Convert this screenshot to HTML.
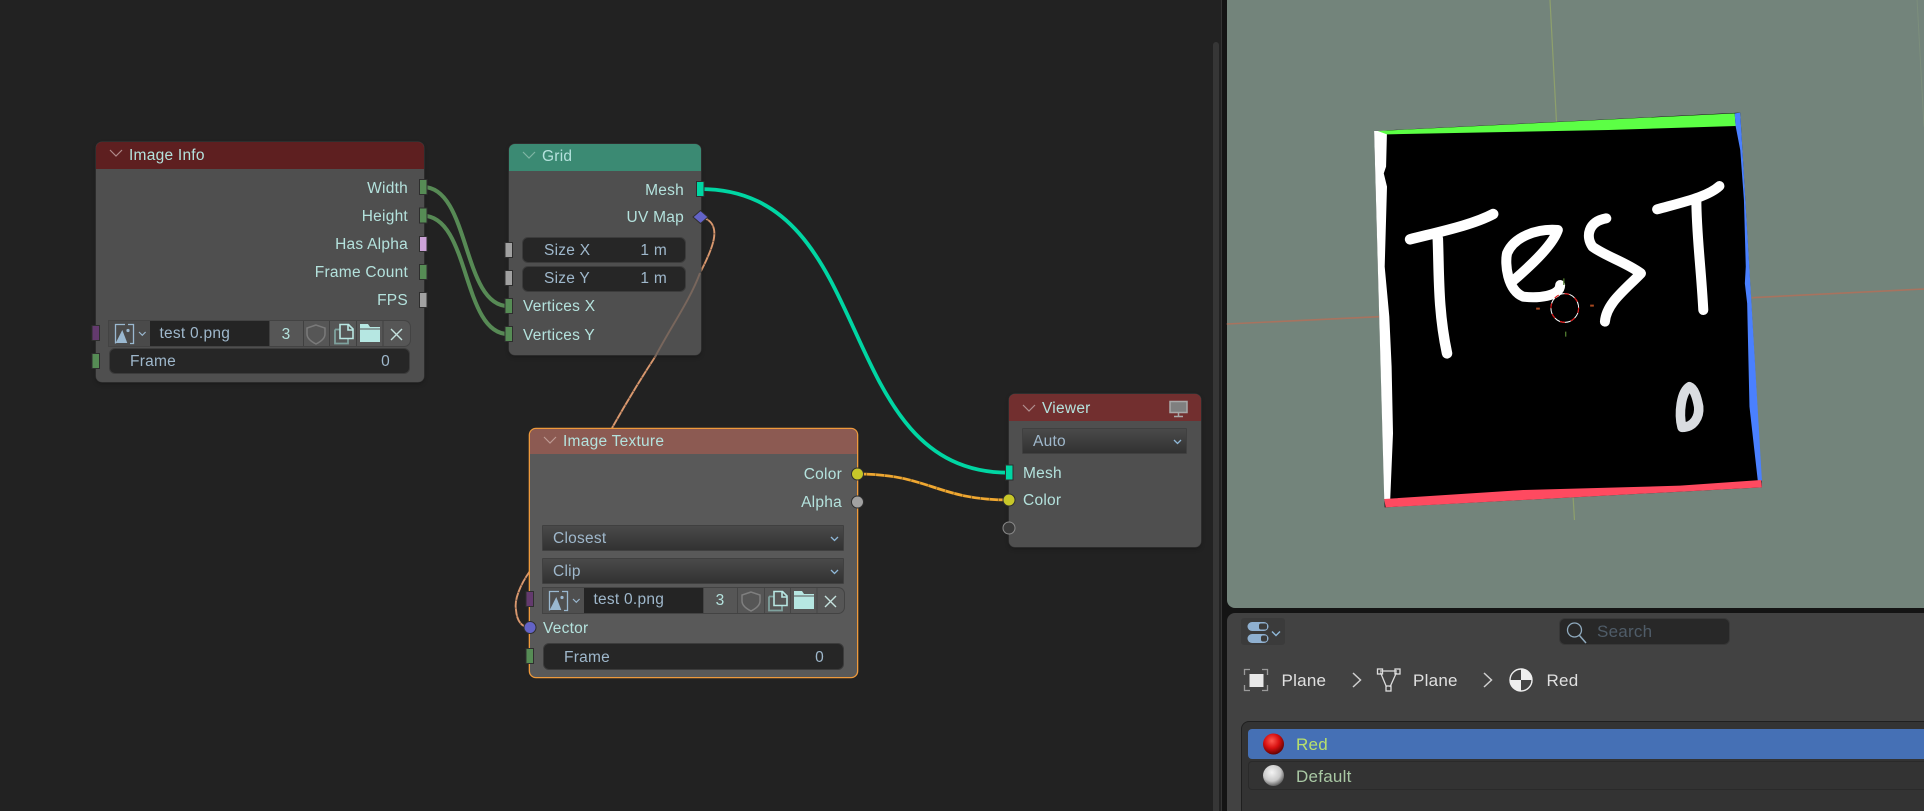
<!DOCTYPE html>
<html><head><meta charset="utf-8"><style>
html,body{margin:0;padding:0;background:#222}
#p{position:relative;width:1924px;height:811px;overflow:hidden;background:#222;font-family:"Liberation Sans",sans-serif;font-size:15.5px;letter-spacing:.25px}
#p div{position:absolute;box-sizing:border-box}
svg{position:absolute;left:0;top:0;overflow:visible}
.node{background:#4f4f4f;border-radius:6px;box-shadow:0 0 0 .5px #3a3a3a,0 2px 5px rgba(0,0,0,.25)}
.hd{left:0;top:0;right:0;border-radius:6px 6px 0 0}
.t{height:20px;line-height:20px;white-space:nowrap;color:#b4e2dd;margin-top:1.400px}
.r{text-align:right}
.f{background:#262626;border:1px solid #3c3c3c;border-radius:6px}
.dd{background:linear-gradient(#4a4a4a,#323232);border:1px solid #404040;border-radius:1px}
.b{color:#9fb8cc}
.l{font-size:17px}
.row{width:301px;height:25px;border-radius:0 6px 6px 0;background:#565656;box-shadow:0 0 0 1px #434343}
</style></head><body><div id="p">

<!-- scrollbar and split -->
<div style="left:1213px;top:42px;width:6px;height:769px;background:#363636;border-radius:3px 3px 0 0"></div>
<div style="left:1221px;top:0;width:1px;height:811px;background:#343434"></div>
<div style="left:1222px;top:0;width:702px;height:811px;background:#141414"></div>

<!-- links behind nodes -->
<svg width="1924" height="811" fill="none">
<path d="M423 187C470 187 462 306 508 306M423 215.7C470 215.7 462 334 508 334" stroke="#578a55" stroke-width="4"/>
<path d="M700 189C880 189 830 472.7 1009 472.7" stroke="#00d6a3" stroke-width="3.8"/>
<path d="M857 474C930 474 936 500 1009 500" stroke="#efa731" stroke-width="2.800"/>
<path d="M857 474C930 474 936 500 1009 500" stroke="#7a5a20" stroke-width="2.800" stroke-dasharray="1 8" opacity=".7"/>
<path d="M700 217C712 219 718 228 712 246C708 258 704 265 700 273C690 300 672 325 655 357C640 380 625 405 612 428" stroke="#d9986e" stroke-width="1.900"/>
<path d="M530 571C520 585 514 600 516 610C517 622 522 627 530 628" stroke="#d9986e" stroke-width="1.900"/>
<path d="M700 217C712 219 718 228 712 246C708 258 704 265 700 273M655 357C640 380 625 405 612 428M530 571C520 585 514 600 516 610C517 622 522 627 530 628" stroke="#6d5040" stroke-width="1.900" stroke-dasharray="1 7" opacity=".7"/>
</svg>

<!-- Image Info -->
<div class="node" style="left:96px;top:141.500px;width:327.500px;height:240.500px">
 <div class="hd" style="height:27px;background:#5e1f20"></div>
</div>
<svg width="1924" height="811" fill="none"><path d="M110 150l6 6 6-6" stroke="#b08a8a" stroke-width="1.2"/></svg>
<div class="t" style="left:129px;top:145px">Image Info</div>
<div class="t r" style="right:1516px;top:178px">Width</div>
<div class="t r" style="right:1516px;top:206px">Height</div>
<div class="t r" style="right:1516px;top:234px">Has Alpha</div>
<div class="t r" style="right:1516px;top:262px">Frame Count</div>
<div class="t r" style="right:1516px;top:290px">FPS</div>

<div class="row" style="left:108.500px;top:321px">
 <div style="left:0;top:0;width:41px;height:25px;background:#4a4a4a"></div>
 <div style="left:41px;top:0;width:119px;height:25px;background:#242424"></div>
 <div class="t b" style="left:51px;top:1.500px">test 0.png</div>
 <div class="t" style="left:160px;width:35px;top:2.500px;text-align:center">3</div>
 <svg width="301" height="25" fill="none">
  <path d="M160.500 0V25M194.500 0V25M220.500 0V25M247.500 0V25M274 0V25" stroke="#404040"/>
  <path d="M16 3.500H6.500V22.500M19 3.500H24.500V22.500H21" stroke="#9ab8d0" stroke-width="1.300"/>
  <path d="M6.700 22L13.300 9 18.300 22Z" fill="#9ab8d0"/><circle cx="19" cy="9.500" r="1.600" fill="#9ab8d0"/>
  <path d="M30 11l3.300 3.300 3.300-3.300" stroke="#9ab8d0" stroke-width="1.200"/>
  <path d="M207 4L198 7V13C198 18 203 21 207 23C211 21 216 18 216 13V7Z" stroke="#7a7a7a" stroke-width="1.500"/>
  <path d="M226 8.500H231M226 8.500V22.500H239V18" stroke="#7fa29e" stroke-width="1.800"/>
  <path d="M231 3.500H239.500L244 8V17.500H231ZM239 4V9H244" stroke="#b8e6e2" stroke-width="1.600"/>
  <path d="M251 3H259L261 6H271V21H251Z" fill="#b6e7e2"/><path d="M251 8H271" stroke="#565656"/>
  <path d="M282 8L293 19M293 8L282 19" stroke="#c5e2de" stroke-width="1.400"/>
 </svg>
</div>
<div class="f" style="left:108.500px;top:348px;width:301px;height:26px"></div>
<div class="t b" style="left:130px;top:351px">Frame</div>
<div class="t b r" style="right:1534px;top:351px">0</div>

<!-- Grid -->
<div class="node" style="left:509px;top:143.500px;width:191.500px;height:211.500px">
 <div class="hd" style="height:27px;background:#3b8a73"></div>
</div>
<svg width="1924" height="811" fill="none">
<path d="M523 152l6 6 6-6" stroke="#7fb5a4" stroke-width="1.200"/>
<path d="M700 273C690 300 672 325 655 357" stroke="#78665c" stroke-width="1.900"/>
</svg>
<div class="t" style="left:542px;top:146px">Grid</div>
<div class="t r" style="right:1240px;top:179.500px">Mesh</div>
<div class="t r" style="right:1240px;top:207px">UV Map</div>
<div class="f" style="left:522px;top:237px;width:164px;height:26px"></div>
<div class="f" style="left:522px;top:266px;width:164px;height:26px"></div>
<div class="t b" style="left:544px;top:240px">Size X</div>
<div class="t b r" style="right:1257px;top:240px">1 m</div>
<div class="t b" style="left:544px;top:268px">Size Y</div>
<div class="t b r" style="right:1257px;top:268px">1 m</div>
<div class="t" style="left:523px;top:296px">Vertices X</div>
<div class="t" style="left:523px;top:324.500px">Vertices Y</div>

<!-- Viewer -->
<div class="node" style="left:1009px;top:394px;width:192px;height:153px">
 <div class="hd" style="height:27px;background:#722f2f"></div>
</div>
<svg width="1924" height="811" fill="none">
<path d="M1023 405l6 6 6-6" stroke="#b09090" stroke-width="1.200"/>
<rect x="1170" y="401.500" width="17" height="11" stroke="#a8a8a8" stroke-width="1.500" fill="#7f7f7f"/>
<path d="M1178.500 413v3M1174 416.500h9" stroke="#a8a8a8" stroke-width="1.500"/>
</svg>
<div class="t" style="left:1042px;top:397.500px">Viewer</div>
<div class="dd" style="left:1022px;top:428px;width:165px;height:26px"></div>
<div class="t b" style="left:1033px;top:431px">Auto</div>
<svg width="1924" height="811" fill="none"><path d="M1174 440l3.500 3.500 3.500-3.500" stroke="#8fb8d8" stroke-width="1.300"/></svg>
<div class="t" style="left:1023px;top:463px">Mesh</div>
<div class="t" style="left:1023px;top:490px">Color</div>

<!-- Image Texture -->
<div class="node" style="left:530px;top:428.500px;width:327px;height:248px;background:#595959;box-shadow:0 0 0 1.300px #ef9a3c">
 <div class="hd" style="height:25.500px;background:#8c5a52"></div>
</div>
<svg width="1924" height="811" fill="none"><path d="M544 437l6 6 6-6" stroke="#bd9a93" stroke-width="1.200"/></svg>
<div class="t" style="left:563px;top:431px">Image Texture</div>
<div class="t r" style="right:1082px;top:464px">Color</div>
<div class="t r" style="right:1082px;top:492px">Alpha</div>
<div class="dd" style="left:542px;top:525px;width:302px;height:26px"></div>
<div class="t b" style="left:553px;top:528px">Closest</div>
<div class="dd" style="left:542px;top:558px;width:302px;height:26px"></div>
<div class="t b" style="left:553px;top:561px">Clip</div>
<svg width="1924" height="811" fill="none"><path d="M831 537l3.500 3.500 3.500-3.500M831 570l3.500 3.500 3.500-3.500" stroke="#8fb8d8" stroke-width="1.300"/></svg>

<div class="row" style="left:542.500px;top:587.500px">
 <div style="left:0;top:0;width:41.500px;height:25px;background:#4f4f4f"></div>
 <div style="left:41.500px;top:0;width:118.500px;height:25px;background:#242424"></div>
 <div class="t b" style="left:51px;top:1.500px">test 0.png</div>
 <div class="t" style="left:160px;width:35px;top:2.500px;text-align:center">3</div>
 <svg width="301" height="25" fill="none">
  <path d="M160.500 0V25M194.500 0V25M221.500 0V25M247.500 0V25M274 0V25" stroke="#454545"/>
  <path d="M16 3.500H6.500V22.500M19 3.500H24.500V22.500H21" stroke="#9ab8d0" stroke-width="1.300"/>
  <path d="M6.700 22L13.300 9 18.300 22Z" fill="#9ab8d0"/><circle cx="19" cy="9.500" r="1.600" fill="#9ab8d0"/>
  <path d="M30 11l3.300 3.300 3.300-3.300" stroke="#9ab8d0" stroke-width="1.200"/>
  <path d="M208 4L199 7V13C199 18 204 21 208 23C212 21 217 18 217 13V7Z" stroke="#7f7f7f" stroke-width="1.500"/>
  <path d="M226 8.500H231M226 8.500V22.500H239V18" stroke="#7fa29e" stroke-width="1.800"/>
  <path d="M231 3.500H239.500L244 8V17.500H231ZM239 4V9H244" stroke="#b8e6e2" stroke-width="1.600"/>
  <path d="M251 3H259L261 6H271V21H251Z" fill="#b6e7e2"/><path d="M251 8H271" stroke="#5a5a5a"/>
  <path d="M282 8L293 19M293 8L282 19" stroke="#c5e2de" stroke-width="1.400"/>
 </svg>
</div>
<div class="t" style="left:543px;top:618px">Vector</div>
<div class="f" style="left:542.500px;top:643px;width:301px;height:27px"></div>
<div class="t b" style="left:564px;top:647px">Frame</div>
<div class="t b r" style="right:1100px;top:647px">0</div>

<!-- Sockets -->
<svg width="1924" height="811">
<g stroke="#2e2e2e" stroke-width="1">
<rect x="419.500" y="179.500" width="7.500" height="15" fill="#568c55"/>
<rect x="419.500" y="208" width="7.500" height="15" fill="#568c55"/>
<rect x="419.500" y="236.500" width="7.500" height="15" fill="#cda3d9"/>
<rect x="419.500" y="264.500" width="7.500" height="15" fill="#568c55"/>
<rect x="419.500" y="292.500" width="7.500" height="15" fill="#a1a1a1"/>
<rect x="92" y="325.500" width="7.500" height="15" fill="#633a6e"/>
<rect x="92" y="353.500" width="7.500" height="15" fill="#568c55"/>
<rect x="696.500" y="181.500" width="7.500" height="15" fill="#00d6a3"/>
<path d="M700.500 210.500L708 217 700.500 223.500 693 217Z" fill="#6363c7"/>
<rect x="505" y="242.500" width="7.500" height="15" fill="#a1a1a1"/>
<rect x="505" y="270.500" width="7.500" height="15" fill="#a1a1a1"/>
<rect x="505" y="298.500" width="7.500" height="15" fill="#568c55"/>
<rect x="505" y="326.500" width="7.500" height="15" fill="#568c55"/>
<rect x="1005.500" y="465" width="7.500" height="15" fill="#00d6a3"/>
<circle cx="1009" cy="500" r="6" fill="#c7c729"/>
<circle cx="1009" cy="528" r="6" fill="#3a3a3a" stroke="#8a8a8a"/>
<circle cx="857.500" cy="474" r="6" fill="#c7c729"/>
<circle cx="857.500" cy="502" r="6" fill="#a1a1a1"/>
<rect x="526" y="591.500" width="7.500" height="15" fill="#633a6e"/>
<circle cx="530" cy="627.500" r="6" fill="#6363c7"/>
<rect x="526" y="648.500" width="7.500" height="15" fill="#568c55"/>
</g></svg>

<!-- Viewport -->
<div style="left:1227px;top:0;width:697px;height:608px;background:#73847b;border-radius:0 0 0 8px"></div>
<svg width="724" height="520" viewBox="0 0 1568 1560" preserveAspectRatio="none" style="left:1200px;top:0;width:724px;height:520px" fill="none">
<path d="M58 972L388 950M1195 893L1568 867" stroke="#a8735f" stroke-width="1.600" vector-effect="non-scaling-stroke"/>
<path d="M758 0L772 365M808 1490L811 1560" stroke="#8ea06c" stroke-width="1.200" vector-effect="non-scaling-stroke"/>
<path d="M1553 0L1568 380" stroke="#7c8e7c" stroke-width="1" vector-effect="non-scaling-stroke"/>
<path d="M377 393L1170 338 1217 1462 400 1522Z" fill="#000"/>
<path d="M377 393L405 392 403 500 398 520 405 560 400 800 410 950 415 1100 418 1300 412 1497 399 1497Z" fill="#fff"/>
<path d="M385 393L1158 340 1160 378 885 390 510 400 405 403Z" fill="#5cff45"/>
<path d="M1158 340L1170 338 1217 1442 1208 1442 1190 1220 1185 910 1180 850 1182 800 1178 600 1170 450 1160 378Z" fill="#4a80ff"/>
<path d="M399 1497L700 1470 1040 1457 1215 1440 1217 1462 402 1522Z" fill="#ff4a60"/>
<path d="M455 718C520 695 590 675 635 642M515 715C518 820 515 930 535 1060" stroke="#fff" stroke-width="10.500" stroke-linecap="round" vector-effect="non-scaling-stroke"/>
<path d="M780 855C780 890 730 895 700 890C665 870 660 790 665 760C680 710 730 685 775 690C765 730 730 780 680 840" stroke="#fff" stroke-width="10" stroke-linecap="round" stroke-linejoin="round" vector-effect="non-scaling-stroke"/>
<path d="M880 655C840 665 835 710 850 740C880 770 920 785 955 820C920 870 880 910 877 965" stroke="#fff" stroke-width="10" stroke-linecap="round" stroke-linejoin="round" vector-effect="non-scaling-stroke"/>
<path d="M990 628C1050 605 1100 590 1125 558M1075 600C1075 700 1085 800 1090 930" stroke="#fff" stroke-width="10" stroke-linecap="round" vector-effect="non-scaling-stroke"/>
<path d="M1060 1160C1042 1175 1036 1240 1044 1282C1070 1282 1082 1250 1080 1220C1076 1190 1070 1165 1060 1160Z" stroke="#d9dce0" stroke-width="9.500" stroke-linejoin="round" vector-effect="non-scaling-stroke"/>
<ellipse cx="790" cy="924" rx="30" ry="43" stroke="#fff" stroke-width="1" vector-effect="non-scaling-stroke"/>
<ellipse cx="790" cy="924" rx="30" ry="43" stroke="#e01010" stroke-width="1.100" stroke-dasharray="5 6" vector-effect="non-scaling-stroke"/>
<path d="M728 926H736M845 917H853" stroke="#a8481f" stroke-width="2" vector-effect="non-scaling-stroke"/>
<path d="M788 835V855M792 995V1010" stroke="#4f7a2f" stroke-width="1.300" vector-effect="non-scaling-stroke"/>
</svg>

<!-- Properties -->
<div style="left:1227px;top:613px;width:697px;height:198px;background:#424242;border-radius:8px 0 0 0"></div>
<div style="left:1241px;top:618px;width:44px;height:27px;background:#3b3b3b;border-radius:3px"></div>
<div style="left:1559px;top:618px;width:171px;height:27px;background:#282828;border:1px solid #383838;border-radius:6px"></div>
<div class="t l" style="left:1597px;top:621px;color:#4f5c68">Search</div>
<div class="t l" style="left:1281.500px;top:670px;color:#e0e0e0">Plane</div>
<div class="t l" style="left:1413px;top:670px;color:#e0e0e0">Plane</div>
<div class="t l" style="left:1546.500px;top:670px;color:#e0e0e0">Red</div>
<svg width="1924" height="811" fill="none">
<rect x="1247.500" y="622" width="21" height="9" rx="4.500" fill="#8fb0d0"/><rect x="1259" y="623.500" width="8" height="6" rx="2" fill="#3b3b3b"/>
<rect x="1247.500" y="634" width="21" height="9" rx="4.500" fill="#8fb0d0"/><rect x="1261" y="635.500" width="6" height="6" rx="2" fill="#3b3b3b"/>
<path d="M1272 631.500l4 4 4-4" stroke="#8fb8d8" stroke-width="1.400"/>
<circle cx="1574.500" cy="630" r="7" stroke="#8faabe" stroke-width="1.300"/><path d="M1579.500 635.500l6.500 7.500" stroke="#8faabe" stroke-width="1.500"/>
<path d="M1244.500 675V669.500H1250M1262 669.500H1267.500V675M1267.500 685V690.500H1262M1250 690.500H1244.500V685" stroke="#9a9a9a" stroke-width="1.300"/>
<rect x="1249.500" y="674" width="14" height="13" fill="#e8e8e8"/>
<path d="M1353 673l7.500 7-7.500 7M1484 673l7.500 7-7.500 7" stroke="#d0d0d0" stroke-width="1.500"/>
<path d="M1380 671H1397M1380.500 672.500L1386.500 687M1396.500 672.500L1390 687" stroke="#dcdcdc" stroke-width="1.300"/>
<rect x="1377.500" y="669" width="5" height="5" stroke="#dcdcdc" stroke-width="1.300"/><rect x="1395" y="669" width="5" height="5" stroke="#dcdcdc" stroke-width="1.300"/><rect x="1386" y="686" width="5" height="5" stroke="#dcdcdc" stroke-width="1.300"/>
<circle cx="1521" cy="680" r="11" fill="#424242" stroke="#eee" stroke-width="1.400"/>
<path d="M1521 669A11 11 0 0 1 1532 680H1521ZM1521 680H1510A11 11 0 0 0 1521 691Z" fill="#eee"/>
</svg>
<div style="left:1240.500px;top:721px;width:684px;height:90px;background:#333;border:1px solid #1f1f1f;border-right:0;border-bottom:0;border-radius:8px 0 0 0"></div>
<div style="left:1248px;top:729px;width:676px;height:30px;background:#4570b5;border-radius:4px 0 0 4px"></div>
<div style="left:1248px;top:761px;width:676px;height:29px;background:#333;border:1px solid #2a2a2a;border-right:0;border-radius:4px 0 0 4px"></div>
<svg width="1924" height="811">
<defs>
<radialGradient id="rd" cx=".42" cy=".35" r=".7"><stop offset="0" stop-color="#ff5a50"/><stop offset=".5" stop-color="#d81010"/><stop offset="1" stop-color="#500000"/></radialGradient>
<radialGradient id="wh" cx=".42" cy=".35" r=".7"><stop offset="0" stop-color="#f4f4f4"/><stop offset=".6" stop-color="#c8c8c8"/><stop offset="1" stop-color="#4c4c4c"/></radialGradient>
</defs>
<circle cx="1273.500" cy="744" r="10.500" fill="url(#rd)"/>
<circle cx="1273.500" cy="775.500" r="10.500" fill="url(#wh)"/>
</svg>
<div class="t l" style="left:1296px;top:734px;color:#b8e06c">Red</div>
<div class="t l" style="left:1296px;top:765.500px;color:#a9c8a4">Default</div>
</div></body></html>
